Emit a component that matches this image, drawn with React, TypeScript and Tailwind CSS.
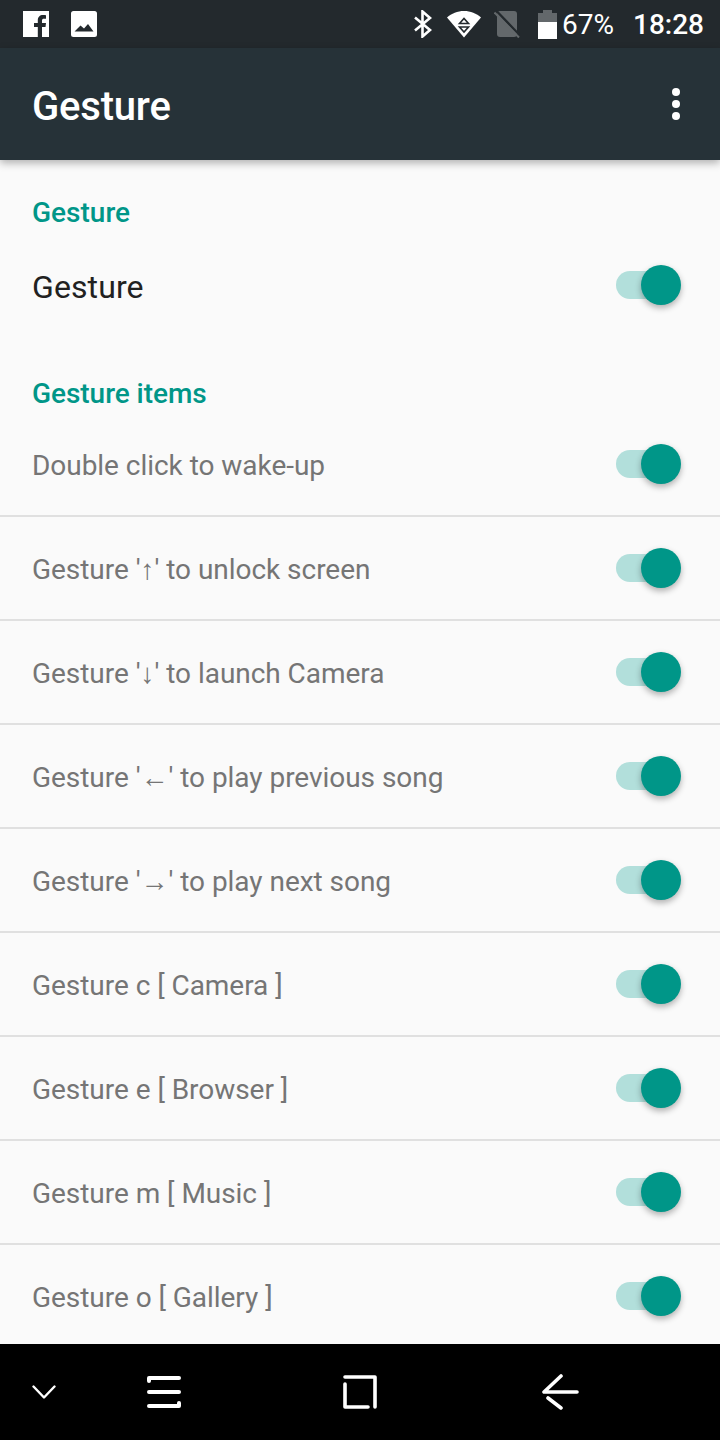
const items = [
  "Double click to wake-up",
  "Gesture '↑' to unlock screen",
  "Gesture '↓' to launch Camera",
  "Gesture '←' to play previous song",
  "Gesture '→' to play next song",
  "Gesture c [ Camera ]",
  "Gesture e [ Browser ]",
  "Gesture m [ Music ]",
  "Gesture o [ Gallery ]",
];

function Toggle() {
  return (
    <div className="relative mr-[48px] h-[28px] w-[56px] shrink-0 rounded-full bg-[#b2dfdb]">
      <div className="absolute left-[25px] top-[-6px] h-[40px] w-[40px] rounded-full bg-[#009688] shadow-[0_3px_6px_rgba(0,0,0,0.3)]" />
    </div>
  );
}

function StatusBar() {
  return (
    <div className="flex h-[48px] items-center bg-[#23292d] text-white">
      {/* facebook */}
      <svg className="ml-[23px]" width="26" height="26" viewBox="0 0 26 26">
        <path fill="#fff" d="M0 0H26V26H19V16H22.5L23 12H19V9.5C19 8.4 19.6 7.8 20.8 7.8H23V4.2C22.2 4.1 21.2 4 20 4C16.8 4 14.8 6 14.8 9.2V12H11V16H14.8V26H0Z" />
      </svg>
      {/* picture */}
      <svg className="ml-[22px]" width="26" height="26" viewBox="0 0 26 26">
        <path fill="#fff" fillRule="evenodd" d="M2.5 0H23.5A2.5 2.5 0 0 1 26 2.5V23.5A2.5 2.5 0 0 1 23.5 26H2.5A2.5 2.5 0 0 1 0 23.5V2.5A2.5 2.5 0 0 1 2.5 0ZM3.5 20.5H22.5L17 13L13 17.5L9.5 14.5Z" />
      </svg>
      {/* bluetooth */}
      <svg className="ml-[317px]" width="18" height="28" viewBox="0 0 18 28">
        <path fill="none" stroke="#fff" strokeWidth="2.6" d="M1 7.5L16 20L8.5 26.5V1.5L16 8L1 20.5" />
      </svg>
      {/* wifi with data arrows */}
      <svg className="ml-[15px]" width="34" height="28" viewBox="0 0 34 28">
        <path fill="#fff" d="M0 7.5C4.5 3.5 10.5 1 17 1C23.5 1 29.5 3.5 34 7.5L17 27.5Z" />
        <path fill="none" stroke="#23292d" strokeWidth="1.6" d="M12.5 13.5L17 8.5L21.5 13.5ZM12.5 17H21.5L17 22Z" />
      </svg>
      {/* no sim */}
      <svg className="ml-[13px]" width="26" height="28" viewBox="0 0 26 28">
        <rect x="3" y="1" width="20" height="26" rx="3" fill="#63686b" />
        <path stroke="#23292d" strokeWidth="2.4" d="M2.5 1L25 24.5" />
        <path stroke="#63686b" strokeWidth="2" d="M0.5 2.5L25 27.5" />
      </svg>
      {/* battery */}
      <svg className="ml-[18px]" width="19" height="29" viewBox="0 0 19 29">
        <path fill="#63686b" d="M5 0H14V3H19V12H0V3H5Z" />
        <rect y="12" width="19" height="17" fill="#fff" />
      </svg>
      <span className="ml-[5px] pt-[1px] font-['Roboto',sans-serif] text-[28px] leading-[48px]">67%</span>
      <span className="ml-[19px] pt-[1px] font-['Roboto',sans-serif] text-[28px] font-medium leading-[48px]">18:28</span>
    </div>
  );
}

function NavBar() {
  return (
    <div className="flex h-[96px] items-center bg-black">
      <svg className="ml-[32px]" width="24" height="14" viewBox="0 0 24 14">
        <path fill="none" stroke="#fff" strokeWidth="2.4" strokeLinecap="round" strokeLinejoin="round" d="M1.5 1.5L12 12.5L22.5 1.5" />
      </svg>
      <svg className="ml-[91px]" width="34" height="32" viewBox="0 0 34 32">
        <path fill="none" stroke="#fff" strokeWidth="4" strokeLinecap="round" strokeLinejoin="round" d="M2 5V2H32M2 16H32M2 30H32V27" />
      </svg>
      <svg className="ml-[162px]" width="34" height="34" viewBox="0 0 34 34">
        <path fill="none" stroke="#fff" strokeWidth="3.6" strokeLinecap="round" strokeLinejoin="round" d="M2 2H32V32M2 9V32H25" />
      </svg>
      <svg className="ml-[164px]" width="38" height="36" viewBox="0 0 38 36">
        <path fill="none" stroke="#fff" strokeWidth="3.6" strokeLinecap="round" strokeLinejoin="round" d="M20 2L3 18H36M7 24L20 34" />
      </svg>
    </div>
  );
}

export default function App() {
  return (
    <div className="flex h-[1440px] w-[720px] flex-col overflow-hidden bg-[#fafafa] font-['Roboto',sans-serif]">
      <StatusBar />
      <header className="relative z-10 flex h-[112px] shrink-0 items-center justify-between bg-[#263238] pl-[32px] pr-[40px] shadow-[0_3px_8px_rgba(0,0,0,0.3)]">
        <h1 className="pt-[6px] text-[40px] font-medium leading-[48px] tracking-[-0.2px] text-white">Gesture</h1>
        <div className="flex flex-col gap-[4px]">
          <span className="h-[8px] w-[8px] rounded-full bg-white" />
          <span className="h-[8px] w-[8px] rounded-full bg-white" />
          <span className="h-[8px] w-[8px] rounded-full bg-white" />
        </div>
      </header>

      <main className="flex-1 overflow-hidden">
        <h2 className="pl-[32px] pt-[33px] text-[28px] font-medium leading-[40px] text-[#009688]">Gesture</h2>
        <div className="flex h-[104px] items-center justify-between">
          <span className="pl-[32px] pt-[3px] text-[32px] leading-[40px] tracking-[0.1px] text-[#212121]">Gesture</span>
          <Toggle />
        </div>
        <h2 className="pl-[32px] pt-[37px] text-[28px] font-medium leading-[40px] tracking-[-0.05px] text-[#009688]">Gesture items</h2>
        {items.map((label, i) => (
          <div
            key={label}
            className={`flex h-[104px] items-center justify-between border-b-2 ${i === items.length - 1 ? "border-transparent" : "border-[#e0e0e0]"} ${i === 0 ? "-mt-[1px]" : ""}`}
          >
            <span className="pl-[32px] pt-[4px] font-['Roboto','Noto_Sans',sans-serif] text-[28px] leading-[40px] tracking-[-0.04px] text-[#757575]">{label}</span>
            <Toggle />
          </div>
        ))}
      </main>

      <NavBar />
    </div>
  );
}
